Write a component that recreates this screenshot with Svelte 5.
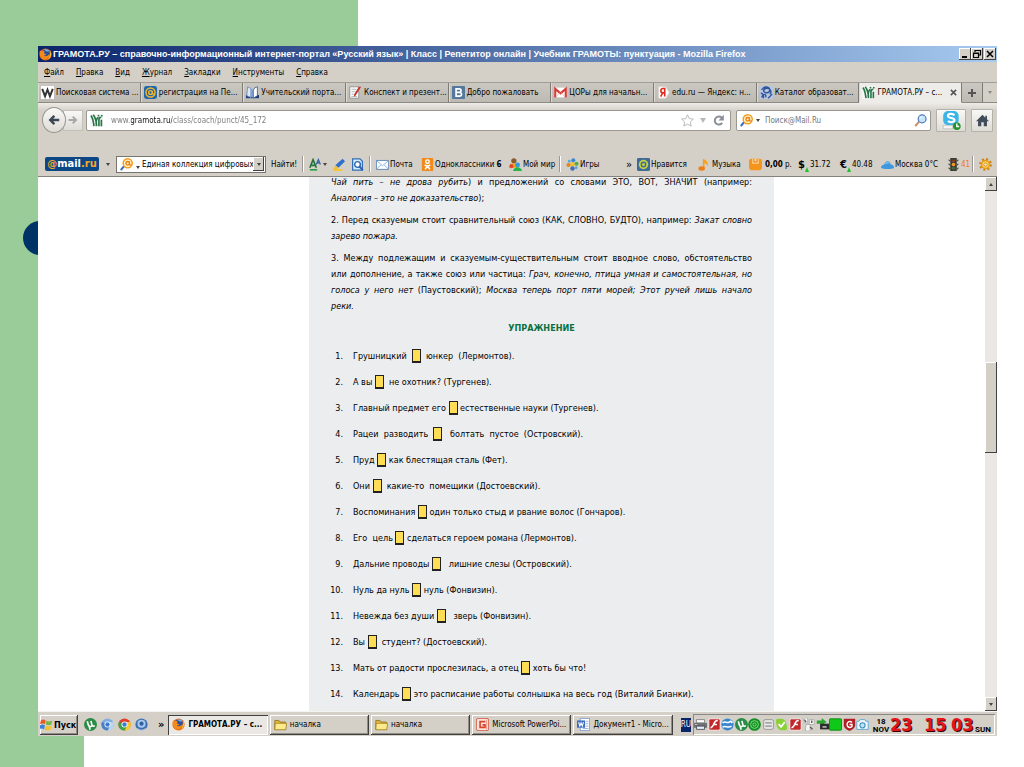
<script>
    const menus = ['Файл', 'Правка', 'Вид', 'Журнал', 'Закладки', 'Инструменты', 'Справка'];

    const tabs = [
        { icon: 'w', title: 'Поисковая система ...' },
        { icon: 'at', title: 'регистрация на Пе...' },
        { icon: 'book', title: 'Учительский порта...' },
        { icon: 'note', title: 'Конспект и презент...' },
        { icon: 'vk', title: 'Добро пожаловать' },
        { icon: 'gmail', title: 'ЦОРы для начальн...' },
        { icon: 'yandex', title: 'edu.ru — Яндекс: н...' },
        { icon: 'catalog', title: 'Каталог образоват...' },
        { icon: 'gramota', title: 'ГРАМОТА.РУ – с...', active: true }
    ];

    // Text before and after the blank that has to be filled in
    const exercises = [
        ['Грушницкий  ', '  юнкер  (Лермонтов).'],
        ['А вы ', '  не охотник? (Тургенев).'],
        ['Главный предмет его ', ' естественные науки (Тургенев).'],
        ['Рацеи  разводить  ', '   болтать  пустое  (Островский).'],
        ['Пруд ', ' как блестящая сталь (Фет).'],
        ['Они ', '  какие-то  помещики (Достоевский).'],
        ['Воспоминания ', ' один только стыд и рвание волос (Гончаров).'],
        ['Его  цель ', ' сделаться героем романа (Лермонтов).'],
        ['Дальние проводы ', '   лишние слезы (Островский).'],
        ['Нуль да нуль ', ' нуль (Фонвизин).'],
        ['Невежда без души ', '   зверь (Фонвизин).'],
        ['Вы ', '  студент? (Достоевский).'],
        ['Мать от радости прослезилась, а отец ', ' хоть бы что!'],
        ['Календарь ', ' это расписание работы солнышка на весь год (Виталий Бианки).']
    ];

    const quickLaunch = ['torrent', 'chromium', 'chrome', 'agent'];

    const tasks = [
        { icon: 'firefox', title: 'ГРАМОТА.РУ – с...', active: true },
        { icon: 'folder', title: 'началка' },
        { icon: 'folder', title: 'началка' },
        { icon: 'ppt', title: 'Microsoft PowerPoi...' },
        { icon: 'word', title: 'Документ1 - Micro...' }
    ];

    const tray = ['printer', 'flash', 'globe', 'torrent', 'spiral', 'disk', 'check', 'flash', 'puzzle', 'eject', 'square', 'shield', 'camera'];

    let address = $state('www.gramota.ru/class/coach/punct/45_172');
    let search = $state('');
</script>

{#snippet icon(name)}
    <svg class="icon" viewBox="0 0 16 16" aria-hidden="true">
        {#if name === 'firefox'}
            <circle cx="8" cy="8" r="7.5" fill="#e66a12" />
            <circle cx="8.5" cy="6.5" r="4.8" fill="#2a4f9c" />
            <path d="M6 2c3-1 6 0 7 2-2 0-3 1-4 0z" fill="#6fb0e6" />
            <path d="M1 3c1 1 2 1 3 1 1-.5 2-.4 3 0-1 1-1 2 0 3 1 .5 2 .2 2 1-1 1-2 1-3 1 2 2 5 1 7-2 0 4-3 7-6 7-4 0-7-4-6-11z" fill="#f58a1c" />
            <path d="M14 3c2 4 1 9-3 11 2-3 3-6 3-11z" fill="#fbc42f" />
        {:else if name === 'w'}
            <rect width="16" height="16" fill="#fff" />
            <path d="M1.500 3.500L5 12.500 8 4.500l3 8 3.500-9" fill="none" stroke="#333" stroke-width="2.400" />
        {:else if name === 'at'}
            <rect width="16" height="16" rx="3" fill="#1f67a8" />
            <circle cx="8" cy="8" r="5.600" fill="none" stroke="#f4b52c" stroke-width="1.800" />
            <circle cx="8" cy="8" r="2.300" fill="none" stroke="#f4b52c" stroke-width="1.700" />
            <path d="M10.300 6v3.500q1.500 1 2.500-.5" fill="none" stroke="#f4b52c" stroke-width="1.500" />
        {:else if name === 'book'}
            <path d="M0 11h16v4H0z" fill="#1e3c79" />
            <path d="M2 1l4 2v11l-5-2z" fill="#dce8fa" stroke="#6787bd" />
            <path d="M6 3l3 2v10l-3-2z" fill="#7fa6da" />
            <path d="M9 5l2-3 3-1v11l-5 3z" fill="#fff" stroke="#36588f" />
        {:else if name === 'note'}
            <path d="M1 1h11v14H1z" fill="#fff" stroke="#888" />
            <path d="M3 4h6M3 7h5M3 10h3M3 13h7" stroke="#9aa" />
            <path d="M15 1L8 12l-2 1 .5-3L12 1z" fill="#c1372b" />
        {:else if name === 'vk'}
            <rect width="16" height="16" rx="1" fill="#55789f" />
            <path d="M5 3.500h4a2 2 0 010 4.200H5zM5 8h4.500a2.200 2.200 0 010 4.500H5z" fill="none" stroke="#fff" stroke-width="2" />
        {:else if name === 'gmail'}
            <path d="M0 2h16v12H0z" fill="#fff" />
            <path d="M1.500 14V3.500L8 9l6.500-5.500V14" fill="none" stroke="#d93b33" stroke-width="2.600" />
            <path d="M3 13l4-5M13 13L9 8" stroke="#e5b4b0" />
        {:else if name === 'yandex'}
            <path d="M2 1h9l4 7-4 7H2z" fill="#fff" stroke="#d9d6d0" />
            <path d="M9.500 13V3H7.500a2.500 2.500 0 000 5.500h2M7 8.500L4.500 13" fill="none" stroke="#e02b20" stroke-width="2" />
        {:else if name === 'catalog'}
            <rect width="16" height="16" fill="#b9c6df" />
            <path d="M2 5c3-6 10-4 10 0s-5 4-7 2 2-5 5-4 5 5 2 7M2 14c2-5 6-5 5 0M1 9c3 0 4 3 3 6M10 15l5-5" fill="none" stroke="#31549b" stroke-width="1.700" />
        {:else if name === 'gramota'}
            <rect width="16" height="16" fill="#f5f6f4" />
            <path d="M1 2c3 3 3 8 4 13M4 1c3 4 4 9 4 14M8 15c-1-5 0-9 2-11M11 15V7c0-2 1-3 3-3M14 15V7" fill="none" stroke="#277547" stroke-width="2" />
            <circle cx="10.500" cy="2" r="1.100" fill="#277547" />
            <circle cx="14.500" cy="2" r="1.100" fill="#277547" />
        {:else if name === 'mailsearch'}
            <path d="M1 15l4-5" stroke="#3d6fc0" stroke-width="2.600" />
            <circle cx="9.500" cy="6.500" r="5.600" fill="#fff3c4" stroke="#f09a1a" stroke-width="1.700" />
            <circle cx="9.500" cy="6.500" r="2.200" fill="none" stroke="#ee7d13" stroke-width="1.700" />
            <path d="M11.700 4v4q1 1.500 2.500 0" fill="none" stroke="#ee7d13" stroke-width="1.400" />
        {:else if name === 'lens'}
            <path d="M1.500 15l5-6" stroke="#c98f6d" stroke-width="2.600" />
            <circle cx="10" cy="6" r="4.800" fill="#c7e4fa" stroke="#4c7fbd" stroke-width="1.500" />
            <path d="M7.500 5.500c.5-2 2-2.500 3.500-2" fill="none" stroke="#fff" />
        {:else if name === 'star'}
            <path d="M8 1l2.200 4.700 5 .6-3.700 3.500 1 5.100L8 12.400l-4.500 2.500 1-5.100L.8 6.300l5-.6z" fill="#fff" stroke="#aaa" />
        {:else if name === 'reload'}
            <path d="M12 4.500A5 5 0 1012.500 11" fill="none" stroke="#8a8f96" stroke-width="2.400" />
            <path d="M14.500 1v7H8z" fill="#8a8f96" />
        {:else if name === 'back'}
            <path d="M15 8H4M8.500 2.500L3 8l5.500 5.500" fill="none" stroke="#3b4654" stroke-width="3.200" />
        {:else if name === 'forward'}
            <path d="M1 8h11M7.500 2.500L13 8l-5.500 5.500" fill="none" stroke="#a5a7a8" stroke-width="3" />
        {:else if name === 'home'}
            <path d="M8 1L0 9h2.500v6h4v-5h3v5h4V9H16l-2.500-2.500V2h-2v2.500z" fill="#414d5b" />
        {:else if name === 'skype'}
            <rect x="1" y="0" width="13" height="12" rx="4" fill="#3bb4e6" />
            <path d="M10.500 3.500C9 2 5 2 5 4.200s5.500 1.300 5.500 3.400S6.500 10 5 8.500" fill="none" stroke="#fff" stroke-width="1.800" />
            <path d="M1 12h8v3H1z" fill="#f5f5f5" stroke="#aaa" stroke-width=".5" />
            <circle cx="12.500" cy="12.800" r="3.200" fill="#24912b" />
            <path d="M12.500 10.500v2.500h2" fill="none" stroke="#fff" stroke-width="1.200" />
        {:else if name === 'font'}
            <path d="M1 12L5 2l4 10M3 9h4" fill="none" stroke="#24743a" stroke-width="2" />
            <path d="M9 8l2.500-6L14 8M10 6h3" fill="none" stroke="#2c5da0" stroke-width="1.500" />
            <path d="M1 14.500h9" stroke="#2c9c43" stroke-width="2" />
        {:else if name === 'marker'}
            <path d="M13 1l3 3-8 8-4-3z" fill="#2f6fce" />
            <path d="M4 9l4 3-3 2H2z" fill="#f6bd28" />
            <path d="M1 15h12" stroke="#f6c633" stroke-width="2.500" />
        {:else if name === 'preview'}
            <path d="M2 1h9l3 3v11H2z" fill="#d7eaff" stroke="#2f6db5" stroke-width="1.500" />
            <circle cx="8" cy="8" r="3.500" fill="#fff" stroke="#2a65b0" stroke-width="1.700" />
            <path d="M10.500 10.500l4 4.500" stroke="#2a65b0" stroke-width="2.500" />
        {:else if name === 'mail'}
            <path d="M.5 3h15v11H.5z" fill="#fff" stroke="#4679b8" />
            <path d="M1 3.500l7 6 7-6M1 13.500l5-5M15 13.500l-5-5" fill="none" stroke="#7ba4d4" />
        {:else if name === 'ok'}
            <rect x="1" width="14" height="16" rx="1" fill="#f08a1d" />
            <circle cx="8" cy="4.500" r="2.200" fill="none" stroke="#fff" stroke-width="1.700" />
            <path d="M4.500 8.500q3.500 2.500 7 0M8 10l-3 4M8 10l3 4" fill="none" stroke="#fff" stroke-width="1.900" />
        {:else if name === 'people'}
            <circle cx="6" cy="3.500" r="3.300" fill="#8c5a2b" />
            <path d="M0 12c0-7 10-7 11 0z" fill="#f3a71c" />
            <circle cx="10.500" cy="8.500" r="3" fill="#2f9be0" />
            <path d="M5 16c1-6 10-6 11 0z" fill="#27b44b" />
            <circle cx="3" cy="10" r="2.500" fill="#e4482a" />
        {:else if name === 'games'}
            <circle cx="8" cy="8" r="3" fill="#f3bf2b" />
            <circle cx="9" cy="2.700" r="2.500" fill="#3b88cf" />
            <circle cx="13" cy="7" r="2.500" fill="#4fae4b" />
            <circle cx="8" cy="13" r="2.700" fill="#3f6fb8" />
            <circle cx="3" cy="8.500" r="2.500" fill="#e0832a" />
            <circle cx="4" cy="4" r="1.700" fill="#58a5dc" />
            <circle cx="12.500" cy="12" r="1.700" fill="#58a5dc" />
        {:else if name === 'like'}
            <rect x=".5" y=".5" width="15" height="15" rx="1" fill="#3d6d9d" stroke="#2e557e" />
            <circle cx="8" cy="8" r="5.800" fill="#c7d23a" />
            <circle cx="8" cy="8" r="2.700" fill="none" stroke="#3d6d9d" stroke-width="1.700" />
        {:else if name === 'music'}
            <path d="M6 13V1c5 2 7 5 6 9-1-3-3-4-4-4v7" fill="#f6a01c" />
            <ellipse cx="4.500" cy="13" rx="4" ry="2.700" fill="#ed7f16" />
        {:else if name === 'wallet'}
            <rect y="1" width="16" height="14" rx="3" fill="#f6951d" />
            <path d="M4 1h8v6H4z" fill="#ffd795" />
            <path d="M6 1v4h4V1" fill="none" stroke="#d56b0a" />
        {:else if name === 'cloud'}
            <path d="M0 12c0-3 3-4 4-4 1-5 7-6 8 0 3 0 4 2 4 4 0 2-15 2-16 0z" fill="#3f97df" />
            <path d="M5 8c1-3 4-4 6-1-2-1-4 0-6 1z" fill="#a4d3f7" />
        {:else if name === 'traffic'}
            <path d="M4 0h8v16H4z" fill="#3a3a36" />
            <path d="M1 2h3v3zM15 2h-3v3zM1 7h3v3zM15 7h-3v3zM1 12h3v3zM15 12h-3v3z" fill="#55524a" />
            <circle cx="8" cy="3.500" r="2" fill="#8b3a28" />
            <circle cx="8" cy="8" r="2.200" fill="#f59a1c" />
            <circle cx="8" cy="12.500" r="2" fill="#4b6b36" />
        {:else if name === 'gear'}
            <circle cx="8" cy="8" r="6.400" fill="none" stroke="#cf8716" stroke-width="3" stroke-dasharray="2.500 2.500" />
            <circle cx="8" cy="8" r="4.800" fill="#ffd45a" stroke="#e49a1d" stroke-width="1.800" />
            <circle cx="8" cy="8" r="2" fill="#f3efe4" stroke="#c98212" />
        {:else if name === 'windows'}
            <path d="M1 3c2-1.500 4-1.500 6 0L6 7.500c-2-1.200-4-1-6 0z" fill="#e8592b" />
            <path d="M8 3.500c2 1.200 4 1.200 7 0L14 8c-2 1.200-5 1.200-7 0z" fill="#73b843" />
            <path d="M0 9c2-1.500 4-1.500 6 0l-1 5c-2-1.500-4-1.300-6 0z" fill="#3e82d6" />
            <path d="M7 9.500c2 1.200 4 1.200 7 0l-1 5c-2 1.200-5 1.200-7 0z" fill="#f4c22d" />
        {:else if name === 'torrent'}
            <circle cx="8" cy="8" r="8" fill="#2a8c45" />
            <path d="M4 4l1.500 5q2 3 4.500.5L8.500 3.500M10 9.500q2 1.500 3-.5M6.500 10.500l1 4" fill="none" stroke="#fff" stroke-width="2" />
        {:else if name === 'chromium' || name === 'chrome'}
            <circle cx="8" cy="8" r="7.500" fill={name === 'chrome' ? '#e23c2e' : '#7eaee0'} />
            <path d="M8 15.500A7.500 7.500 0 0015 5H8z" fill={name === 'chrome' ? '#f7c925' : '#b9d5f1'} />
            <path d="M1.300 4.500A7.500 7.500 0 008 15.500L11 10z" fill={name === 'chrome' ? '#3ea44a' : '#4a80c2'} />
            <circle cx="8" cy="8" r="3.700" fill="#fff" />
            <circle cx="8" cy="8" r="2.700" fill="#3c7bd0" />
        {:else if name === 'agent'}
            <circle cx="8" cy="8" r="7.500" fill="#3d6fb3" />
            <circle cx="8" cy="7" r="5" fill="#a7c9ee" />
            <circle cx="8" cy="7" r="2.600" fill="#32609f" />
            <path d="M3 13q5 4 10 0" stroke="#dce9f8" fill="none" />
        {:else if name === 'folder'}
            <path d="M1 3h5l1.500 2H14v9H1z" fill="#e6b93a" stroke="#8f6e14" />
            <path d="M1.500 6.500h14l-1 8H1z" fill="#fdea8c" stroke="#a07f20" />
        {:else if name === 'ppt'}
            <rect x=".5" y=".5" width="15" height="15" rx="2" fill="#fae4de" stroke="#d15037" />
            <path d="M11.500 4.500H5v7h6V8.500H8" fill="none" stroke="#d8442c" stroke-width="2" />
            <path d="M13 2v12" stroke="#e98c78" />
        {:else if name === 'word'}
            <path d="M4 .5h11.500v15H4z" fill="#fff" stroke="#6f95d2" />
            <path d="M11 4h3M11 7h3M11 10h3M7 13h7" stroke="#7da0d8" />
            <path d="M0 3h10v9H0z" fill="#3a6cc0" />
            <path d="M2 5l1.500 5L5 6l1.500 4L8 5" fill="none" stroke="#fff" stroke-width="1.300" />
        {:else if name === 'printer'}
            <path d="M3 2h10v4H3z" fill="#fff" stroke="#777" />
            <path d="M0 6h16v6H0z" fill="#6f7276" />
            <path d="M3 10h10v4H3z" fill="#e5eefc" stroke="#444" />
            <path d="M1 8h3" stroke="#cfd3d8" />
        {:else if name === 'flash'}
            <rect x="1" y="1" width="14" height="14" rx="2" fill="#c2282a" stroke="#fff" />
            <path d="M12 3c-4 0-4 3-5 5s-2 4-4 4M6 8h5" fill="none" stroke="#fff" stroke-width="2" />
        {:else if name === 'globe'}
            <circle cx="8" cy="8" r="7.500" fill="#3a86ce" />
            <path d="M2 6c3-3 5 1 8-1s3 0 4 1M2 11c4-2 6 2 11-1" fill="none" stroke="#fff" stroke-width="2" />
        {:else if name === 'spiral'}
            <circle cx="8" cy="8" r="7.800" fill="#158d22" />
            <circle cx="8" cy="8" r="4.800" fill="none" stroke="#7be07d" stroke-width="1.200" />
            <circle cx="8" cy="8" r="2" fill="none" stroke="#7be07d" stroke-width="1.200" />
        {:else if name === 'disk'}
            <rect x="2" y="2" width="12" height="12" rx="2" fill="#e7e7e5" stroke="#8b8b88" />
            <path d="M4 6h8M4 10h8" stroke="#8d9095" stroke-width="1.500" />
        {:else if name === 'check'}
            <path d="M1 4q0-4 4-3 8-1 9 6l1 5q0 4-4 3-8 1-9-6z" fill="#8bd038" />
            <path d="M4.500 7.500l3 3.500L12 5" fill="none" stroke="#fff" stroke-width="2.200" />
        {:else if name === 'puzzle'}
            <path d="M1 0h6v6H3zM9 2h6v6H9zM5 8h5v8H4z" fill="#f6f6f4" stroke="#aaa" />
            <path d="M3 2l2 3M10 11l3 3M12 3v3" stroke="#555" stroke-width="1.600" />
        {:else if name === 'eject'}
            <path d="M1 3h6V0l6 5-6 4V7H1z" fill="#2aa52f" />
            <path d="M5 7h11v7H5z" fill="#2b2b2b" />
            <path d="M8 10h5v2H8z" fill="#bbb" />
        {:else if name === 'square'}
            <rect x=".5" y="1" width="15" height="14" rx="1" fill="#10c81a" stroke="#067a0c" />
        {:else if name === 'shield'}
            <path d="M1 1h14v8c0 3-4 6-7 7-3-1-7-4-7-7z" fill="#b01f24" />
            <path d="M11 5.500C9 3 5 4.500 5 8s4 4.500 6 2.500V8H8" fill="none" stroke="#fff" stroke-width="1.800" />
        {:else if name === 'camera'}
            <path d="M1 4h3l1-2h6l1 2h3v10H1z" fill="#f2f9fe" stroke="#4aa0d4" />
            <circle cx="8" cy="9" r="3.200" fill="#bfe2f5" stroke="#3a8cc2" stroke-width="1.300" />
        {/if}
    </svg>
{/snippet}

<div class="slide">
    <div class="circle"></div>

    <div class="window">
        <header class="titlebar">
            {@render icon('firefox')}
            <h1>ГРАМОТА.РУ – справочно-информационный интернет-портал «Русский язык» | Класс | Репетитор онлайн | Учебник ГРАМОТЫ: пунктуация - Mozilla Firefox</h1>
            <div class="window-buttons">
                <button aria-label="Свернуть"><svg viewBox="0 0 12 12"><path d="M3 9h5" stroke="#000" stroke-width="2" /></svg></button>
                <button aria-label="Восстановить"><svg viewBox="0 0 12 12"><path d="M4 2.500h5.500V7H8M4 2v2M2.500 5h5v4.500h-5zM2.500 5.500h5" fill="none" stroke="#000" stroke-width="1.200" /></svg></button>
                <button aria-label="Закрыть"><svg viewBox="0 0 12 12"><path d="M3 3l6 6M9 3L3 9" stroke="#000" stroke-width="1.500" /></svg></button>
            </div>
        </header>

        <nav class="menubar">
            {#each menus as menu}
                <button><u>{menu[0]}</u>{menu.slice(1)}</button>
            {/each}
        </nav>

        <div class="tabs">
            {#each tabs as tab}
                <button class="tab" class:active={tab.active}>
                    {@render icon(tab.icon)}
                    <span>{tab.title}</span>
                    {#if tab.active}<svg class="close" viewBox="0 0 8 8"><path d="M1 1l6 6M7 1L1 7" stroke="#555" stroke-width="1.800" /></svg>{/if}
                </button>
            {/each}
            <button class="new-tab" aria-label="Новая вкладка"><svg viewBox="0 0 12 12"><path d="M6 2v8M2 6h8" stroke="#555" stroke-width="2" /></svg></button>
            <button class="all-tabs" aria-label="Все вкладки"><i class="arrow"></i></button>
        </div>

        <div class="navbar">
            <button class="back" aria-label="Назад">{@render icon('back')}</button>
            <button class="forward" aria-label="Вперёд">{@render icon('forward')}</button>
            <div class="field address">
                {@render icon('gramota')}
                <input type="text" aria-label="Адрес" bind:value={address} />
                {@render icon('star')}
                <i class="arrow"></i>
                {@render icon('reload')}
            </div>
            <div class="field search">
                {@render icon('mailsearch')}
                <i class="arrow"></i>
                <input type="text" aria-label="Поиск" placeholder="Поиск@Mail.Ru" bind:value={search} />
                {@render icon('lens')}
            </div>
            <button class="nav-button skype" aria-label="Skype">{@render icon('skype')}</button>
            <button class="nav-button" aria-label="Домой">{@render icon('home')}</button>
        </div>

        <div class="toolbar">
            <a class="logo" href="#mail"><em>@</em>mail<em>.ru</em></a>
            <i class="arrow"></i>
            <div class="combo">
                {@render icon('mailsearch')}
                <i class="arrow"></i>
                <select aria-label="Запрос">
                    <option>Единая коллекция цифровых</option>
                </select>
                <span class="drop"><i class="arrow"></i></span>
            </div>
            <button class="find">Найти!</button>
            <button class="tool ruled" aria-label="Шрифт">{@render icon('font')}<i class="arrow"></i></button>
            <button class="tool" aria-label="Выделить">{@render icon('marker')}</button>
            <button class="tool" aria-label="Просмотр">{@render icon('preview')}</button>
            <button class="tool ruled">{@render icon('mail')}Почта</button>
            <button class="tool">{@render icon('ok')}Одноклассники <b>6</b></button>
            <button class="tool">{@render icon('people')}Мой мир</button>
            <button class="tool ruled">{@render icon('games')}Игры</button>
            <button class="tool more">»</button>
            <button class="tool">{@render icon('like')}Нравится</button>
            <button class="tool">{@render icon('music')}Музыка</button>
            <button class="tool">{@render icon('wallet')}<b>0,00</b>&nbsp;р.</button>
            <button class="tool"><strong>$</strong><i class="up"></i>31.72</button>
            <button class="tool"><strong>€</strong><i class="up"></i>40.48</button>
            <button class="tool">{@render icon('cloud')}Москва 0°C</button>
            <button class="tool jam">{@render icon('traffic')}41</button>
            <button class="tool ruled" aria-label="Настройки">{@render icon('gear')}</button>
        </div>

        <div class="viewport">
            <main class="page">
                <article>
                    <p>
                        <span class="line"><em>Чай пить – не дрова рубить</em>) и предложений со словами ЭТО, ВОТ, ЗНАЧИТ (например:</span>
                        <em>Аналогия – это не доказательство</em>);
                    </p>
                    <p>
                        <span class="line">2. Перед сказуемым стоит сравнительный союз (КАК, СЛОВНО, БУДТО), например: <em>Закат словно</em></span>
                        <em>зарево пожара.</em>
                    </p>
                    <p>
                        <span class="line">3. Между подлежащим и сказуемым-существительным стоит вводное слово, обстоятельство</span>
                        <span class="line">или дополнение, а также союз или частица: <em>Грач, конечно, птица умная и самостоятельная, но</em></span>
                        <span class="line"><em>голоса у него нет</em> (Паустовский); <em>Москва теперь порт пяти морей; Этот ручей лишь начало</em></span>
                        <em>реки.</em>
                    </p>
                    <h2>УПРАЖНЕНИЕ</h2>
                    <ol>
                        {#each exercises as [before, after], i}
                            <li><span class="number">{i + 1}.</span>{before}<button class="blank" aria-label="Пропуск {i + 1}"></button>{after}</li>
                        {/each}
                    </ol>
                </article>
            </main>
            <div class="scrollbar">
                <button aria-label="Вверх"><i class="arrow flip"></i></button>
                <div class="track"><div class="thumb"></div></div>
                <button aria-label="Вниз"><i class="arrow"></i></button>
            </div>
        </div>

        <footer class="taskbar">
            <button class="start">{@render icon('windows')}Пуск</button>
            <div class="quick">
                {#each quickLaunch as name}
                    {@render icon(name)}
                {/each}
                <span>»</span>
            </div>
            <div class="tasks">
                {#each tasks as task}
                    <button class="task" class:active={task.active}>
                        {@render icon(task.icon)}
                        <span>{task.title}</span>
                    </button>
                {/each}
            </div>
            <span class="language">RU</span>
            <div class="tray">
                <div class="tray-icons">
                    {#each tray as name}
                        {@render icon(name)}
                    {/each}
                </div>
                <div class="clock">
                    <small>18<br />NOV</small>
                    <b>23</b>
                    <b>15</b>
                    <b>03</b>
                    <small>SUN</small>
                </div>
            </div>
        </footer>
    </div>
</div>

<style>
    :global(body) {
        background: #fff;
    }

    .slide {
        position: relative;
        box-sizing: border-box;
        display: flex;
        height: 100vh;
        padding: 46px 27px 31px 38px;
        background:
            linear-gradient(#9c9, #9c9) 0 0 / 358px 120px no-repeat,
            linear-gradient(#9c9, #9c9) 0 0 / 84px 100% no-repeat,
            #fff;
        font-family: "DejaVu Sans Condensed", "DejaVu Sans", sans-serif;
        font-size: 8px;
        color: #000;
    }

    /* Sits behind the window, only its left edge is seen */
    .circle {
        position: absolute;
        left: 23px;
        top: 221px;
        width: 34px;
        height: 34px;
        border-radius: 50%;
        background: #036;
    }

    .window {
        position: relative;
        display: flex;
        flex: 1;
        flex-direction: column;
        min-width: 0;
        background: #d4d0c8;
    }

    button,
    input,
    select {
        margin: 0;
        padding: 0;
        border: 0;
        background: none;
        color: inherit;
        font: inherit;
        white-space: nowrap;
    }

    .icon {
        display: block;
        flex: none;
        width: 13px;
        height: 13px;
    }

    .arrow {
        flex: none;
        width: 0;
        height: 0;
        border: 2px solid transparent;
        border-top: 3px solid #444;
        border-bottom: 0;
    }

    .arrow.flip {
        transform: rotate(180deg);
    }

    .titlebar {
        display: flex;
        align-items: center;
        height: 16px;
        padding: 0 1px;
        background: linear-gradient(90deg, #0a246a, #a6caf0);
    }

    .titlebar h1 {
        flex: 1;
        margin: 0 0 0 1px;
        color: #fff;
        font-family: "Liberation Sans", sans-serif;
        font-size: 9px;
        font-weight: bold;
        line-height: 16px;
        white-space: nowrap;
    }

    .window-buttons {
        display: flex;
    }

    .window-buttons button {
        display: flex;
        width: 12px;
        height: 12px;
        background: #d4d0c8;
        box-shadow: inset -1px -1px #404040, inset 1px 1px #fff;
    }

    .window-buttons button:last-child {
        margin-left: 1px;
    }

    .window-buttons svg {
        width: 12px;
    }

    .menubar {
        display: flex;
        gap: 12px;
        height: 20px;
        padding-left: 6px;
    }

    .tabs {
        display: flex;
        height: 20px;
        border-top: 1px solid #a09d96;
    }

    .tab,
    .new-tab,
    .all-tabs {
        box-sizing: border-box;
        display: flex;
        align-items: center;
        border-right: 1px solid #7d7a74;
        border-bottom: 1px solid #8d8a84;
        background: linear-gradient(#cbc8c1, #bdbab3);
    }

    .tab {
        flex: 1 1 0;
        gap: 2px;
        min-width: 0;
        padding: 0 2px 0 3px;
        box-shadow: inset 1px 0 #dedbd5;
    }

    .tab span {
        flex: 1;
        text-align: left;
    }

    .close {
        flex: none;
        width: 7px;
        margin-right: 2px;
    }

    .tab.active {
        border-bottom-color: #eeece8;
        background: #eeece8;
    }

    .new-tab,
    .all-tabs {
        justify-content: center;
        width: 21px;
    }

    .new-tab svg {
        width: 12px;
    }

    .all-tabs {
        width: 14px;
        border-right: 0;
        background: none;
    }

    .all-tabs .arrow {
        border-top-color: #888;
    }

    .navbar {
        display: flex;
        align-items: center;
        height: 34px;
        padding: 0 4px 0 4px;
        background: linear-gradient(#eeece8, #d4d0c8 8px);
    }

    .back,
    .forward,
    .nav-button {
        display: flex;
        align-items: center;
        justify-content: center;
        box-sizing: border-box;
        border: 1px solid #b4b1aa;
        background: linear-gradient(#f8f8f6, #dfdcd6);
    }

    .back {
        z-index: 1;
        width: 24px;
        height: 26px;
        border-color: #989690;
        border-radius: 50%;
    }

    .forward {
        width: 20px;
        height: 21px;
        margin: 0 3px 0 -3px;
        border-color: #c4c1ba;
    }

    .forward .icon,
    .back .icon {
        width: 12px;
        height: 12px;
    }

    .forward .icon {
        width: 10px;
    }

    .field {
        display: flex;
        align-items: center;
        box-sizing: border-box;
        height: 21px;
        border: 1px solid #9b9892;
        border-radius: 2px;
        background: #fff;
    }

    .field input {
        flex: 1;
        min-width: 0;
        outline: 0;
    }

    .address {
        flex: 1;
        gap: 6px;
        margin-right: 5px;
        padding: 0 5px 0 3px;
    }

    /* The host name is darker than the rest of the address */
    .address input {
        margin-left: 2px;
        background: linear-gradient(90deg, #777 20px, #111 20px 61px, #777 61px);
        background-clip: text;
        color: transparent;
    }

    .address .arrow {
        border-width: 5px 3px 0;
        border-top-color: #b9b9b9;
    }

    .search {
        gap: 3px;
        width: 195px;
        padding: 0 3px;
    }

    .search input {
        margin-left: 2px;
    }

    .search input::placeholder {
        color: #777;
        opacity: 1;
    }

    .nav-button {
        width: 22px;
        height: 23px;
        margin-left: 5px;
        border-radius: 1px;
    }

    .nav-button.skype {
        width: 30px;
    }

    .skype .icon {
        width: 19px;
        height: 19px;
    }

    .toolbar {
        display: grid;
        grid-template-columns: 61px 10px 155px 32px 29px 19px 19px 51px 88px 51px 1fr 11px 61px 51px 49px 42px 41px 66px 26px 24px;
        align-items: center;
        height: 24px;
        margin-top: 3px;
        padding: 12px 0 0 7px;
        border-bottom: 1px solid #85827c;
    }

    .logo {
        width: 54px;
        border-radius: 2px;
        background: #0b4685;
        color: #fff;
        font-size: 11px;
        font-weight: bold;
        line-height: 14px;
        text-align: center;
        text-decoration: none;
    }

    .logo em {
        color: #f8a52c;
        font-style: normal;
    }

    .combo {
        display: flex;
        align-items: center;
        box-sizing: border-box;
        width: 150px;
        height: 17px;
        padding: 0 1px 0 3px;
        border: 1px solid #77746e;
        background: #fff;
    }

    .combo > .arrow {
        margin: 6px 2px 0 3px;
    }

    .combo select {
        flex: 1;
        min-width: 0;
        overflow: hidden;
        appearance: none;
        text-overflow: clip;
    }

    .drop {
        display: flex;
        align-items: center;
        justify-content: center;
        width: 11px;
        height: 14px;
        background: #d4d0c8;
        box-shadow: inset -1px -1px #404040, inset 1px 1px #fff;
    }

    .find {
        text-align: left;
    }

    .tool {
        display: flex;
        align-items: center;
        height: 16px;
    }

    .tool.ruled {
        border-left: 1px solid #fff;
        box-shadow: -1px 0 #999;
        padding-left: 5px;
    }

    .tool .icon {
        margin-right: 1px;
    }

    .tool b {
        margin-left: 2px;
    }

    .tool strong {
        font-size: 11px;
    }

    .more {
        font-size: 11px;
    }

    .jam {
        color: #ef7a21;
    }

    .up {
        align-self: flex-end;
        margin-right: 1px;
        border: 2px solid transparent;
        border-top: 0;
        border-bottom: 5px solid #1fc127;
    }

    .viewport {
        display: flex;
        flex: 1;
        min-height: 0;
        overflow: hidden;
        background: #fff;
    }

    .page {
        display: grid;
        flex: 1;
        grid-template-columns: 271fr 465px 211fr;
    }

    article {
        grid-column: 2;
        padding: 0 22px;
        background: #ecedef;
        font-size: 9px;
        line-height: 16px;
    }

    p {
        margin: 0 0 6px;
    }

    /* The page is scrolled, so the first line is cut at the top */
    p:first-child {
        margin-top: -3px;
    }

    .line {
        display: block;
        text-align: justify;
        text-align-last: justify;
        white-space: nowrap;
    }

    h2 {
        margin: 0 0 7px;
        color: #0a7040;
        font-size: 9px;
        font-weight: bold;
        text-align: center;
    }

    ol {
        margin: 0;
        padding: 0;
        list-style: none;
    }

    li {
        display: flex;
        align-items: center;
        height: 26px;
        white-space: pre;
    }

    .number {
        display: flex;
        justify-content: flex-end;
        width: 12px;
        margin-right: 10px;
    }

    .blank {
        width: 9px;
        height: 14px;
        border: 1px solid #222;
        border-bottom-width: 2px;
        background: #fd5;
    }

    .scrollbar {
        display: flex;
        flex-direction: column;
        width: 12px;
        background: #e9e8e4;
    }

    .scrollbar button,
    .thumb {
        background: #d4d0c8;
        box-shadow: inset -1px -1px #404040, inset 1px 1px #fff;
    }

    .scrollbar button {
        display: flex;
        align-items: center;
        justify-content: center;
        height: 14px;
    }

    .track {
        flex: 1;
    }

    .thumb {
        height: 18%;
        margin-top: 171px;
    }

    .taskbar {
        display: flex;
        align-items: center;
        box-sizing: border-box;
        height: 25px;
        padding: 1px 2px 0;
        border-top: 1px solid #f4f3f0;
    }

    .start,
    .task {
        display: flex;
        align-items: center;
        height: 20px;
        box-shadow: inset -1px -1px #404040, inset 1px 1px #fff, inset -2px -2px #908d87;
    }

    .start {
        gap: 1px;
        width: 38px;
        font-size: 9px;
        font-weight: bold;
    }

    .quick {
        display: flex;
        align-items: center;
        gap: 4px;
        padding: 0 4px 0 6px;
    }

    .quick span {
        align-self: flex-start;
        margin-left: 6px;
        font-size: 11px;
        font-weight: bold;
    }

    .tasks {
        display: flex;
        flex: 1;
        gap: 2px;
        min-width: 0;
    }

    .task {
        flex: 1 1 0;
        gap: 3px;
        min-width: 0;
        padding: 0 3px 0 4px;
    }

    .task.active {
        background: #eae8e4;
        box-shadow: inset 1px 1px #404040, inset -1px -1px #fff;
        font-weight: bold;
    }

    .language {
        margin: 0 2px 0 8px;
        background: #0a246a;
        color: #fff;
        line-height: 14px;
    }

    .tray {
        display: flex;
        align-items: center;
        height: 21px;
        padding: 0 4px 0 1px;
        box-shadow: inset 1px 1px #888, inset -1px -1px #fff;
    }

    .tray-icons {
        display: flex;
        justify-content: space-between;
        width: 175px;
    }

    .clock {
        display: grid;
        grid-template-columns: 18px 34px 27px 24px 16px;
        align-items: end;
        margin-left: 3px;
        font-weight: bold;
    }

    .clock small {
        font-family: Roboto, sans-serif;
        font-size: 8px;
        line-height: 8px;
        text-align: center;
    }

    .clock b {
        color: #e3141a;
        font-size: 18px;
        line-height: 18px;
        text-shadow: 1px 1px #300;
    }
</style>
